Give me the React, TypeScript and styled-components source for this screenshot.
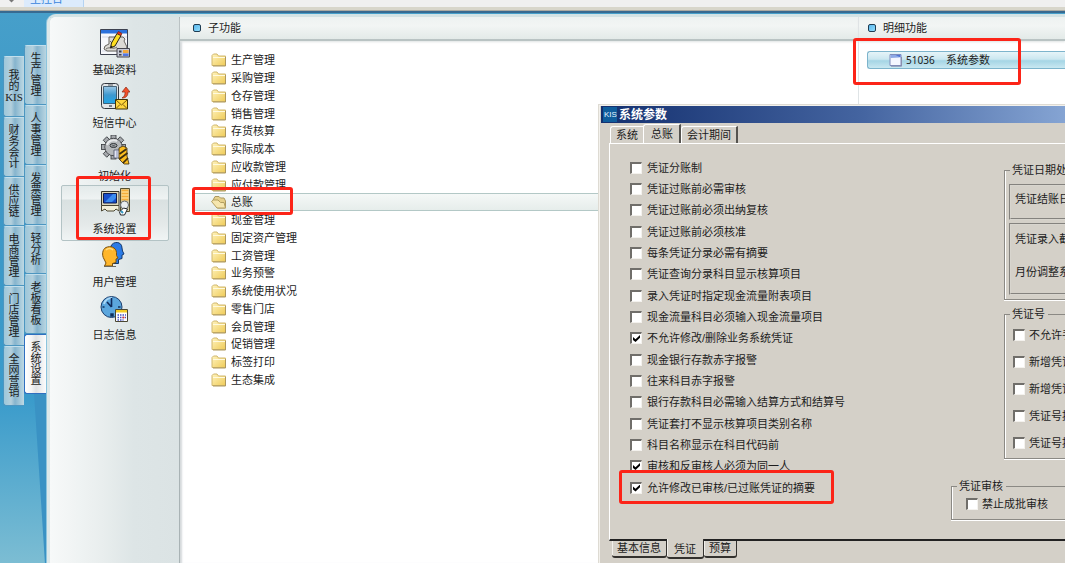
import React, { useState } from "react";
import styled, { createGlobalStyle, css } from "styled-components";

const Global = createGlobalStyle`
  *, *::before, *::after { box-sizing: border-box; }
  html, body { margin: 0; height: 100%; overflow: hidden; }
  #root { height: 100%; }
  body, button, input {
    font-family: "Liberation Sans", "Noto Sans CJK SC", sans-serif;
    font-size: 11px;
    line-height: 16px;
    color: #1c1c1c;
  }
  button { margin: 0; padding: 0; border: 0; background: none; text-align: left; white-space: nowrap; }
  h1, h2, ul { margin: 0; padding: 0; font-size: 11px; font-weight: normal; list-style: none; }
`;

const Shell = styled.div`
  display: flex;
  flex-direction: column;
  height: 100vh;
  overflow: hidden;
  position: relative;
`;

const TopStrip = styled.nav`
  display: flex;
  align-items: flex-end;
  flex: none;
  height: 7px;
  background: #f0f0f0;
`;

const StripArrow = styled.span`
  width: 24px;
  height: 7px;
  padding-left: 8px;
  svg { display: block; }
`;

const StripTab = styled.button`
  width: 60px;
  height: 16px;
  flex: none;
  padding-left: 6px;
  background: #dcebfc;
  border-right: 1px solid #b5d3f2;
  color: #3a86dc;
`;

const Ledge = styled.div`
  flex: none;
  height: 6px;
  background: linear-gradient(#d8d6cb 0 3px, #aaa9a2 3px 4px, #386a90 4px 6px);
`;

const Workspace = styled.div`
  position: relative;
  flex: 1;
  min-height: 0;
  display: flex;
  align-items: stretch;
  background: linear-gradient(#469fca, #3c97c6 30%, #3a9bcb 70%, #7cbdd3);

  &::before {
    content: "";
    position: absolute;
    left: 34px;
    bottom: 0;
    width: 13px;
    height: 170px;
    background: #3a92c4;
    clip-path: polygon(0 0, 100% 0, 100% 100%, 84% 100%, 55% 65%);
  }
`;

const TabColumn = styled.div<{ $outer?: boolean }>`
  position: relative;
  flex: none;
  display: flex;
  flex-direction: column;
  width: ${(p) => (p.$outer ? 24 : 23)}px;
  padding: ${(p) => (p.$outer ? "43px 0 0 3px" : "32px 0 0")};
`;

const SideTab = styled.button<{ $on?: boolean }>`
  display: flex;
  align-items: center;
  justify-content: center;
  padding: 8px 0;
  border: 1px solid #4d96c0;
  border-width: 0 0 1px 1px;
  border-top: 1px solid #c3dfec;
  border-radius: 3px 0 0 3px;
  background: ${(p) =>
    p.$on
      ? "linear-gradient(90deg, #ffffff, #f4f4f5 30%, #dfe1e3 50%, #ffffff)"
      : "linear-gradient(90deg, #9dc7da, #b4d0dd 35%, #86b4cd 55%, #bed9e4)"};
  ${(p) => p.$on && css`border-color: #2f6fc0;`}

  ${TabColumn}:first-child &:first-child { padding: 14px 0; }

  span {
    width: 18px;
    margin: -1px 0;
    line-height: 11px;
    text-align: center;
    white-space: normal;
    font-family: "Liberation Serif", "Noto Sans CJK SC", serif;
  }
`;

const Panel = styled.main`
  position: relative;
  flex: 1;
  min-width: 0;
  display: flex;
  margin-top: 1px;
  border: 3px solid #dde8e9;
  border-width: 3px 0 0 3px;
  border-top-color: #d3e3e5;
  border-radius: 9px 0 0 0;
  background: #fff;
  box-shadow: -1px 0 0 #8cc4dd;
`;

const Rail = styled.nav`
  flex: none;
  width: 130px;
  display: flex;
  flex-direction: column;
  align-items: center;
  padding: 9px 0 0;
  border-radius: 6px 0 0 0;
  border-right: 1px solid #a9b3b5;
  background: linear-gradient(90deg, #f7f9f9, #e9eeee 40%, #dde5e6 65%, #dbe3e4);
`;

const RailItem = styled.button<{ $on?: boolean }>`
  position: relative;
  display: flex;
  flex-direction: column;
  align-items: center;
  gap: 3px;
  width: 108px;
  height: 56px;
  margin-bottom: -3px;
  padding-top: 2px;
  border: 1px solid transparent;
  border-radius: 2px;
  ${(p) =>
    p.$on &&
    css`
      border-color: #b3c3c5;
      background: linear-gradient(#e3eaea 0, #eff3f3 24%, #d9e1e1 26%, #e4e9e9 70%, #f0f4f4);
    `}
  svg { display: block; }
`;

/* Red outline laid over the thing it points at */
const Mark = styled.i<{ $inset: string }>`
  position: absolute;
  inset: ${(p) => p.$inset};
  z-index: 5;
  border: 3px solid #fc2418;
  border-radius: 3px;
  pointer-events: none;
`;

const FolderMark = styled(Mark)`
  width: 101px;
`;

const Pane = styled.section<{ $detail?: boolean }>`
  flex: ${(p) => (p.$detail ? "0 0 207px" : "1")};
  min-width: 0;
  ${(p) =>
    p.$detail
      ? css`border-left: 1px solid #dfe4e6;`
      : css`box-shadow: inset 3px 0 2px -1px #d5dadc;`}
`;

const PaneHead = styled.h2<{ $detail?: boolean }>`
  display: flex;
  align-items: center;
  gap: 7px;
  height: 24px;
  padding-left: ${(p) => (p.$detail ? "9px" : "13px")};
  border-bottom: 2px solid #b9c3c3;
  background: linear-gradient(#eef2f1, #f2f5f4 40%, #e3eae8);
  box-shadow: 0 1px 2px #dfe3e3;

  &::before {
    content: "";
    width: 8px;
    height: 8px;
    border: 1px solid #1e3c52;
    border-radius: 2px;
    background: linear-gradient(135deg, #5cb8ee, #8fdcfb);
  }
`;

const FolderList = styled.ul`
  padding: 10px 0 0 13px;
  li { height: 18px; }
  li:nth-child(4n) { height: 17px; }
`;

const FolderRow = styled.button<{ $on?: boolean }>`
  position: relative;
  display: flex;
  align-items: center;
  gap: 4px;
  width: 100%;
  height: 100%;
  padding-left: 17px;
  border: 1px solid transparent;
  border-right: 0;
  ${(p) =>
    p.$on &&
    css`
      border-color: #b3c8c6;
      background: linear-gradient(#f5f8f7, #e6edeb);
    `}
  svg { display: block; flex: none; }
`;

const DetailBody = styled.div`
  padding: 10px 0 0 8px;
`;

const DetailRow = styled.button`
  position: relative;
  display: flex;
  align-items: center;
  width: 100%;
  height: 18px;
  padding-left: 21px;
  border: 1px solid #7db4cc;
  border-right: 0;
  border-radius: 3px 0 0 3px;
  background: linear-gradient(#e6f4f8, #cbe7f0 45%, #a5d5e5 55%, #c9e8f1);

  svg { flex: none; margin-right: 4px; }
  b { width: 40px; font: 10px/16px "Noto Sans", sans-serif; }
`;

const Dialog = styled.section`
  position: absolute;
  left: 598px;
  top: 104px;
  right: 0;
  bottom: 0;
  display: flex;
  flex-direction: column;
  overflow: hidden;
  padding: 1px 0 0 2px;
  border: 1px solid #dedbd3;
  border-width: 1px 0 0 1px;
  background: #d4d0c8;
  box-shadow: inset 1px 1px 0 #f3f1ec;
`;

const TitleBar = styled.header`
  display: flex;
  align-items: center;
  gap: 2px;
  flex: none;
  height: 17px;
  padding-left: 2px;
  background: linear-gradient(90deg, #14306f, #4464a0 56%, #85a4d3);
  color: #fff;
  h1 { font-size: 12px; font-weight: 700; }
  svg { display: block; }
`;

const TopTabs = styled.div`
  flex: none;
  display: flex;
  align-items: flex-end;
  height: 20px;
  padding-left: 9px;
`;

const TopTab = styled.button<{ $on?: boolean; $edge?: boolean }>`
  height: ${(p) => (p.$on ? 19 : 17)}px;
  padding: 0 5px;
  border: 1px solid #fff;
  border-width: 1px 0 0 1px;
  border-radius: 3px 0 0 0;
  ${(p) => p.$edge && css`border-right: 2px solid #55534f;`}
  ${(p) => p.$on && css`padding: 0 6px 0 7px;`}
`;

const Sheet = styled.div`
  flex: none;
  display: grid;
  grid-template-columns: 341px minmax(240px, 1fr);
  height: 398px;
  margin-left: 8px;
  border: 1px solid #fff;
  border-right: 0;
  border-bottom: 2px solid #222;
`;

const Checks = styled.div`
  padding: 13px 0 0 20px;
  display: flex;
  flex-direction: column;
  align-items: flex-start;
`;

const CheckLabel = styled.label`
  position: relative;
  display: flex;
  align-items: center;
  gap: 4px;
  white-space: nowrap;
`;

const CheckLine = styled(CheckLabel)`
  gap: 5px;
  height: 21px;
  &:nth-child(3n) { height: 22px; }
`;

const Box = styled.input`
  appearance: none;
  position: relative;
  flex: none;
  width: 12px;
  height: 12px;
  margin: 0;
  border: 1px solid #f4f2ee;
  border-top: 2px solid #706e6a;
  border-left: 2px solid #706e6a;
  background: #fff;

  &:checked::after {
    content: "";
    position: absolute;
    left: 1px;
    top: 1px;
    width: 7px;
    height: 7px;
    background: #000;
    clip-path: polygon(0 28%, 36% 60%, 100% 0, 100% 40%, 36% 100%, 0 70%);
  }
`;

const Groups = styled.div`
  display: flex;
  flex-direction: column;
  padding-top: 18px;
`;

const Group = styled.fieldset<{ $wide?: boolean }>`
  position: relative;
  min-width: 0;
  margin: 0 0 0 ${(p) => (p.$wide ? 0 : 53)}px;
  padding: 0 0 0 4px;
  border: 1px solid #8b8984;
  border-right: 0;
  box-shadow: inset 1px 0 0 #fff, 0 1px 0 #fff;
  white-space: nowrap;

  legend {
    height: 16px;
    margin-left: 1px;
    padding: 0 3px 0 2px;
  }
`;

const DateGroup = styled(Group)`
  height: 138px;
  margin-bottom: 6px;
`;

const NumberGroup = styled(Group)`
  height: 153px;
  margin-bottom: 19px;
  label { height: 27px; margin-left: 4px; }
  legend + label { margin-top: -1px; }
`;

const AuditGroup = styled(Group)`
  height: 42px;
  label { height: 16px; margin: 2px 0 0 10px; }
`;

const Inset = styled.div<{ $rows: number }>`
  display: flex;
  flex-direction: column;
  gap: 17px;
  height: ${(p) => (p.$rows === 1 ? 36 : 72)}px;
  margin: ${(p) => (p.$rows === 1 ? "6px" : "3px")} 0 0;
  padding: ${(p) => (p.$rows === 1 ? "5px" : "6px")} 0 0 4px;
  border: 2px groove #d8d5ce;
  border-right: 0;
`;

const BottomTabs = styled.div`
  display: flex;
  align-items: flex-start;
  padding-left: 11px;
`;

const BottomTab = styled.button<{ $on?: boolean }>`
  height: 17px;
  padding: 0 5px;
  border: 1px solid #33312e;
  border-width: 0 1px 2px 0;
  border-radius: 0 0 3px 3px;
  line-height: 15px;
  box-shadow: inset 1px 0 0 #f2f0eb;
  ${(p) =>
    p.$on &&
    css`
      height: 20px;
      margin-top: -2px;
      padding: 3px 7px 0;
      background: #d4d0c8;
    `}
`;

const Folder = ({ open }: { open?: boolean }) => (
  <svg width="16" height="16" viewBox="0 0 16 16" aria-hidden="true">
    <defs>
      <linearGradient id="fold" x1="0" y1="0" x2="1" y2="1">
        <stop offset="0" stopColor="#fff3bd" />
        <stop offset="1" stopColor="#efcb58" />
      </linearGradient>
    </defs>
    {open ? (
      <>
        <path d="M1.500 7 4 2.500h4l1.500 1.500h3.500L14.500 7v7h-8z" fill="#e6d08a" stroke="#ab9860" />
        <path d="M.5 7.500 2.500 6H7l2.500 2.500h3.500l1.500 5.500H6z" fill="#f6e6ae" stroke="#b39f61" />
      </>
    ) : (
      <>
        <path d="M1 13.500V3.500L2.500 2H6l1.500 2h7v9.500z" fill="url(#fold)" stroke="#d0b76e" />
        <path d="M14.500 5v9H2" fill="none" stroke="#ad975c" />
        <path d="M2 5.500h12" stroke="#fffadf" />
      </>
    )}
  </svg>
);

const BasicIcon = () => (
  <svg width="30" height="30" viewBox="0 0 30 30" aria-hidden="true">
    <path d="M.5 .5h27v25H.5z" fill="#f7f8fb" stroke="#3d4250" />
    <path d="M1 1h26v3.500H1z" fill="#2d72dc" />
    <path d="M2 8h25M2 22h25" stroke="#d3d7e4" />
    <path d="M9 8h14l2 2-1 2 3 6-2 4H7l-3-2 1-3 4-2z" fill="#dcdad5" stroke="#67645f" />
    <path d="M6 20c4-3 7 1 11-2M10 12l4 4" fill="none" stroke="#6c6964" />
    <path d="m10.500 19 1-5L17 4.500l4 2L15 17z" fill="#ffdf20" stroke="#2c2610" />
    <path d="M17 4.500 18.500 2.500l3.500 2-1 2z" fill="#e23b22" stroke="#64160c" strokeWidth=".6" />
    <path d="m10.500 19 .4-2.500 2 1.200z" fill="#1c1c1c" />
    <path d="M17 19.500h12.500v8.500H17z" fill="#c6c8d4" stroke="#45454d" />
    <path d="M19 21.500h2.500v2H19zM19 25h2.500v1.500H19z" fill="#3d3d44" />
    <path d="M23 21h5.500v3H23z" fill="#f4a93a" />
    <path d="M23 24.500h5.500V27H23z" fill="#5376e0" />
  </svg>
);

const SmsIcon = () => (
  <svg width="30" height="30" viewBox="0 0 30 30" aria-hidden="true">
    <defs>
      <linearGradient id="scr" x1="0" y1="0" x2="0" y2="1">
        <stop offset="0" stopColor="#9cc8e6" />
        <stop offset=".5" stopColor="#3e98cf" />
        <stop offset="1" stopColor="#21a5e5" />
      </linearGradient>
    </defs>
    <rect x="1.500" y="1.500" width="17" height="25" rx="3" fill="#e2e5e7" stroke="#33383f" />
    <path d="M3.500 4.500h13v17h-13z" fill="url(#scr)" stroke="#27485e" strokeWidth=".8" />
    <path d="M8 3h5" stroke="#565b60" />
    <path d="M9 24h3" stroke="#5b6166" strokeWidth="1.500" />
    <path d="M22 16c3-2 3-4 3-6h-3l4-5 4 5h-2c0 4-2 6-6 6z" fill="#f2502a" stroke="#8a2a15" strokeWidth=".7" />
    <path d="M15.500 17.500H27.500V27H15.500z" fill="#ffd63c" stroke="#3f3208" />
    <path d="m16 18 5.500 5L27 18M16 26.500l4-4M27 26.500l-4-4" fill="none" stroke="#7c5c0a" />
  </svg>
);

const GearIcon = () => (
  <svg width="30" height="30" viewBox="0 0 30 30" aria-hidden="true">
    <g fill="#a6a9ad" stroke="#33363a" strokeWidth=".8">
      {[0, 45, 90, 135, 180, 225, 270, 315].map((a) => (
        <rect key={a} x="11" y="0" width="5" height="6" transform={`rotate(${a} 13.500 12)`} />
      ))}
      <circle cx="13.500" cy="12" r="8.700" />
    </g>
    <circle cx="13.500" cy="12" r="8" fill="#b5b8bb" />
    <path d="M7 10c1-4 6-6 10-4" fill="none" stroke="#e6e8ea" strokeWidth="2" />
    <ellipse cx="13.500" cy="10.500" rx="3.500" ry="2" fill="#9fa3a6" stroke="#33363a" />
    <ellipse cx="13.500" cy="10.800" rx="1.500" ry=".8" fill="#595d61" />
    <path d="M14 15h6v8h-6z" fill="#e3e6f3" stroke="#4c5064" strokeWidth=".8" />
    <path d="M17 15v8" stroke="#8c93b4" />
    <path d="m19 13 4-2 4 2v8l2 8h-5l-5-5z" fill="#fcbe22" stroke="#3a2a08" strokeWidth=".8" />
    <path d="m19.500 19 7-5M19.500 24l8-6M23 28l5-5" stroke="#3b2d10" strokeWidth="1.700" />
  </svg>
);

const SystemIcon = () => (
  <svg width="30" height="30" viewBox="0 0 30 30" aria-hidden="true">
    <path d="M20.500 .5h9v23h-9z" fill="#d5cda9" stroke="#57502f" />
    <path d="M21.500 1.500h7v11h-7z" fill="#f4ae3a" />
    <path d="M21.500 4h7M21.500 7h7M21.500 10h7" stroke="#fff0b2" />
    <path d="M1.500 3.500h17.500v14H1.500z" fill="#ded7b9" stroke="#37352b" />
    <path d="M3.500 5.500h13v9.500h-13z" fill="#194fcb" stroke="#0f1c4e" />
    <path d="m5 14 8-8h3v4l-4 4z" fill="#3b8cf0" />
    <path d="M1.500 17.500h17.500v5.500l-3-2-2 2H7l-2-2-3.500 2z" fill="#f3efd9" stroke="#4b4632" />
    <circle cx="24.500" cy="17" r="4" fill="#e9edf0" stroke="#666a6e" />
    <path d="m19.500 24 4-4 4 1-3 6h-4z" fill="#fff" stroke="#1f2429" />
    <path d="m21 23 2 2" stroke="#3198c2" strokeWidth="2" />
  </svg>
);

const UsersIcon = () => (
  <svg width="30" height="30" viewBox="0 0 30 30" aria-hidden="true">
    <path d="M11 5c2-5 11-5 11 2l.5 3 1.500 3-2 1v3.500l-3.500 1v4H11z" fill="#2b7be6" stroke="#12386c" />
    <path
      d="M4 18c-2.500-4-1.500-10 2-11.500 4-2 10-.5 10.500 5v3l1.500 2.500-2 1v3.500l-3.500 1v2.500H4.500l1.500-3z"
      fill="#ffb62a"
      stroke="#79500c"
    />
    <path d="M6 9c2-2 5-2 7 0" fill="none" stroke="#ffdb85" strokeWidth="1.500" />
    <path d="M4 25.500h12" stroke="#6b685e" />
  </svg>
);

const LogIcon = () => (
  <svg width="30" height="30" viewBox="0 0 30 30" aria-hidden="true">
    <circle cx="11.500" cy="13" r="10.500" fill="#5ba6dd" stroke="#1d3f6e" />
    <path d="M4 10a8 8 0 0 1 8-6" fill="none" stroke="#a9d6f5" strokeWidth="2" />
    <path d="M11.500 13V4M11.500 13 7 8" stroke="#102a5a" strokeWidth="1.600" />
    <path d="M2.500 13h2M18 13h2.500M11 20h2v2h-2z" stroke="#12345f" strokeWidth="1.500" />
    <path d="M15.500 15.500h12v12h-12z" fill="#fff" stroke="#4a4632" />
    <path d="M16 16h11v2.500H16z" fill="#f3cd24" />
    <path d="M17.500 21h8.500M17.500 23.500h8.500M17.500 26h6" stroke="#4150c0" strokeWidth="1.400" strokeDasharray="1.500 1" />
    <path d="M22.500 23.500h2" stroke="#e0352c" strokeWidth="1.500" />
  </svg>
);

const outerTabs = ["我的KIS", "财务会计", "供应链", "电商管理", "门店管理", "全网营销"];
const innerTabs = ["生产管理", "人事管理", "发票管理", "轻分析", "老板看板", "系统设置"];

const railItems = [
  { name: "基础资料", Icon: BasicIcon },
  { name: "短信中心", Icon: SmsIcon },
  { name: "初始化", Icon: GearIcon },
  { name: "系统设置", Icon: SystemIcon },
  { name: "用户管理", Icon: UsersIcon },
  { name: "日志信息", Icon: LogIcon },
];

const folders = [
  "生产管理", "采购管理", "仓存管理", "销售管理", "存货核算", "实际成本", "应收款管理",
  "应付款管理", "总账", "现金管理", "固定资产管理", "工资管理", "业务预警", "系统使用状况",
  "零售门店", "会员管理", "促销管理", "标签打印", "生态集成",
];

const options: [string, boolean][] = [
  ["凭证分账制", false],
  ["凭证过账前必需审核", false],
  ["凭证过账前必须出纳复核", false],
  ["凭证过账前必须核准", false],
  ["每条凭证分录必需有摘要", false],
  ["凭证查询分录科目显示核算项目", false],
  ["录入凭证时指定现金流量附表项目", false],
  ["现金流量科目必须输入现金流量项目", false],
  ["不允许修改/删除业务系统凭证", true],
  ["现金银行存款赤字报警", false],
  ["往来科目赤字报警", false],
  ["银行存款科目必需输入结算方式和结算号", false],
  ["凭证套打不显示核算项目类别名称", false],
  ["科目名称显示在科目代码前", false],
  ["审核和反审核人必须为同一人", true],
  ["允许修改已审核/已过账凭证的摘要", true],
];

const numberOptions = ["不允许手", "新增凭证", "新增凭证", "凭证号按", "凭证号按"];

export default function App() {
  const [rail, setRail] = useState("系统设置");
  const [folder, setFolder] = useState("总账");

  return (
    <>
      <Global />
      <Shell>
        <TopStrip>
          <StripArrow>
            <svg width="8" height="4" viewBox="0 0 8 4" aria-hidden="true">
              <path d="M1 0h5L3.500 2.500z" fill="#777" />
            </svg>
          </StripArrow>
          <StripTab>主控台</StripTab>
        </TopStrip>
        <Ledge />
        <Workspace>
          <TabColumn $outer>
            {outerTabs.map((t) => (
              <SideTab key={t}>
                <span>{t}</span>
              </SideTab>
            ))}
          </TabColumn>
          <TabColumn>
            {innerTabs.map((t) => (
              <SideTab key={t} $on={t === "系统设置"}>
                <span>{t}</span>
              </SideTab>
            ))}
          </TabColumn>
          <Panel>
            <Rail>
              {railItems.map(({ name, Icon }) => (
                <RailItem key={name} $on={rail === name} onClick={() => setRail(name)}>
                  <Icon />
                  {name}
                  {name === "系统设置" && <Mark $inset="-10px 17px 0 14px" />}
                </RailItem>
              ))}
            </Rail>
            <Pane>
              <PaneHead>子功能</PaneHead>
              <FolderList>
                {folders.map((f) => (
                  <li key={f}>
                    <FolderRow $on={folder === f} onClick={() => setFolder(f)}>
                      <Folder open={folder === f} />
                      {f}
                      {f === "总账" && <FolderMark $inset="-7px auto -5px -2px" />}
                    </FolderRow>
                  </li>
                ))}
              </FolderList>
            </Pane>
            <Pane $detail>
              <PaneHead $detail>明细功能</PaneHead>
              <DetailBody>
                <DetailRow>
                  <svg width="13" height="14" viewBox="0 0 13 14" aria-hidden="true">
                    <path d="M1 1.500h11v11H1z" fill="#f5f7ff" stroke="#7f8cbc" />
                    <path d="M1.500 2h10l-1 2.500-9 .5z" fill="#8ea9e6" />
                    <path d="M6.500 2h5v2.500z" fill="#4f74d4" />
                    <path d="M2 13.200h10.500V4" fill="none" stroke="#8a8fae" />
                  </svg>
                  <b>51036</b>
                  系统参数
                  <Mark $inset="-14px 44px -17px -15px" />
                </DetailRow>
              </DetailBody>
            </Pane>
          </Panel>
        </Workspace>

        <Dialog aria-label="系统参数">
          <TitleBar>
            <svg width="14" height="15" viewBox="0 0 14 15" aria-hidden="true">
              <path d="M0 0h14v15H0z" fill="#0f5d9c" />
              <text x="1" y="10" fontSize="8" fill="#e6f4ff" fontFamily="Liberation Sans">
                KIS
              </text>
            </svg>
            <h1>系统参数</h1>
          </TitleBar>
          <TopTabs>
            <TopTab>系统</TopTab>
            <TopTab $on $edge>总账</TopTab>
            <TopTab $edge>会计期间</TopTab>
          </TopTabs>
          <Sheet>
            <Checks>
              {options.map(([text, on], i) => (
                <CheckLine key={text}>
                  <Box type="checkbox" defaultChecked={on} />
                  {text}
                  {i === options.length - 1 && <Mark $inset="-7px -19px -6px -11px" />}
                </CheckLine>
              ))}
            </Checks>
            <Groups>
              <DateGroup>
                <legend>凭证日期处</legend>
                <Inset $rows={1}>凭证结账日</Inset>
                <Inset $rows={2}>
                  <span>凭证录入截</span>
                  <span>月份调整系</span>
                </Inset>
              </DateGroup>
              <NumberGroup>
                <legend>凭证号</legend>
                {numberOptions.map((t, i) => (
                  <CheckLabel key={i}>
                    <Box type="checkbox" />
                    {t}
                  </CheckLabel>
                ))}
              </NumberGroup>
              <AuditGroup $wide>
                <legend>凭证审核</legend>
                <CheckLabel>
                  <Box type="checkbox" />
                  禁止成批审核
                </CheckLabel>
              </AuditGroup>
            </Groups>
          </Sheet>
          <BottomTabs>
            <BottomTab>基本信息</BottomTab>
            <BottomTab $on>凭证</BottomTab>
            <BottomTab>预算</BottomTab>
          </BottomTabs>
        </Dialog>
      </Shell>
    </>
  );
}
